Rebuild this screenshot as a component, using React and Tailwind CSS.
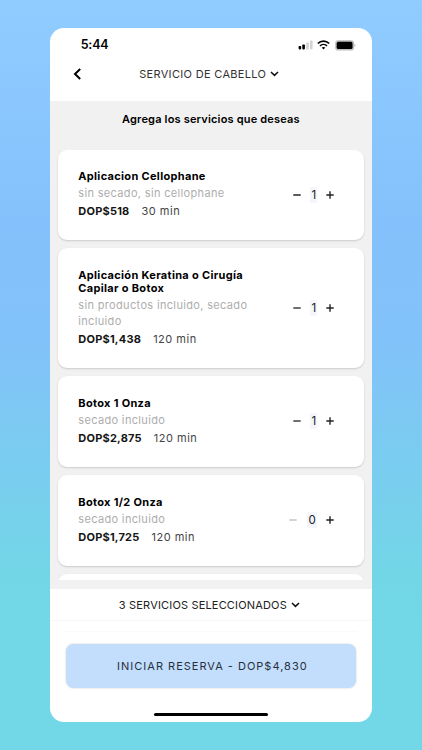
const SERVICES = [
  {
    id: "cellophane",
    title: "Aplicacion Cellophane",
    desc: "sin secado, sin cellophane",
    price: "DOP$518",
    time: "30 min",
    qty: 1,
  },
  {
    id: "keratina",
    title: "Aplicación Keratina o Cirugía Capilar o Botox",
    desc: "sin productos incluido, secado incluido",
    price: "DOP$1,438",
    time: "120 min",
    qty: 1,
  },
  {
    id: "botox-1",
    title: "Botox 1 Onza",
    desc: "secado incluido",
    price: "DOP$2,875",
    time: "120 min",
    qty: 1,
  },
  {
    id: "botox-half",
    title: "Botox 1/2 Onza",
    desc: "secado incluido",
    price: "DOP$1,725",
    time: "120 min",
    qty: 0,
  },
];

const ChevronDown = () => (
  <svg width="9" height="6" viewBox="0 0 9 6" fill="none" stroke="#111" strokeWidth="1.5" className="shrink-0">
    <path d="M1 1 L4.5 4.4 L8 1" />
  </svg>
);

const Signal = () => (
  <svg width="15" height="10" viewBox="0 0 15 10" className="shrink-0">
    <rect x="0.6" y="6" width="2.6" height="3.4" rx="0.8" fill="#000" />
    <rect x="4.3" y="4.4" width="2.6" height="5" rx="0.8" fill="#000" />
    <rect x="8.2" y="2.4" width="2.6" height="7" rx="0.8" fill="#d4d4d4" />
    <rect x="12" y="0.4" width="2.6" height="9" rx="0.8" fill="#d4d4d4" />
  </svg>
);

const Wifi = () => (
  <svg width="13" height="10" viewBox="0 0 13 10" fill="none" stroke="#000" className="shrink-0">
    <path d="M0.8 3.5 C4 0.2 9 0.2 12.2 3.5" strokeWidth="1.7" />
    <path d="M3 5.9 C5 4 8 4 10 5.9" strokeWidth="1.6" />
    <path d="M4.7 7.6 C5.7 6.8 7.3 6.8 8.3 7.6 L6.5 9.6 Z" fill="#000" stroke="none" />
  </svg>
);

const Battery = () => (
  <svg width="21" height="11" viewBox="0 0 21 11" className="shrink-0">
    <rect x="0.2" y="0.3" width="18.8" height="10.2" rx="2.8" fill="#bdbdbd" />
    <rect x="1.7" y="1.8" width="15.8" height="7.2" rx="1.6" fill="#000" />
    <path d="M19.5 3.8 C20.7 4.3 20.7 6.5 19.5 7 Z" fill="#a5a5a5" />
  </svg>
);

const Stepper = ({ qty }) => (
  <div className="flex items-center text-[#222]">
    <button className={qty === 0 ? "text-[#bdbdbd]" : "text-[#222]"}>
      <svg width="8" height="8" viewBox="0 0 8 8" stroke="currentColor" strokeWidth="1.3">
        <path d="M0.3 4 H7.7" />
      </svg>
    </button>
    <span
      className={`mr-[9px] ml-[9.5px] h-4 bg-[#f5f6fb] text-center text-[11.5px] leading-4 ${qty === 0 ? "w-[10.5px]" : "w-[7px]"}`}
    >
      {qty}
    </span>
    <button>
      <svg width="8" height="8" viewBox="0 0 8 8" stroke="currentColor" strokeWidth="1.4">
        <path d="M0.3 4 H7.7 M4 0.3 V7.7" />
      </svg>
    </button>
  </div>
);

const ServiceCard = ({ service }) => (
  <div className="flex shrink-0 items-center justify-between rounded-[9px] bg-white pt-[20.7px] pr-[29.7px] pb-[20.7px] pl-[20.3px] shadow-[0_1px_2px_rgba(0,0,0,0.16)]">
    <div className="w-[178px]">
      <h3 className="text-[11px] font-bold leading-[13px] tracking-[0.32px] text-black">{service.title}</h3>
      <p className="mt-0.5 text-[11px] leading-4 tracking-[0.34px] text-[#adadad]">{service.desc}</p>
      <div className="mt-[2.1px] flex gap-3 text-[11px] leading-4">
        <span className="font-bold tracking-[0.22px] text-[#151515]">{service.price}</span>
        <span className="tracking-[0.5px] text-[#444]">{service.time}</span>
      </div>
    </div>
    <Stepper qty={service.qty} />
  </div>
);

export default function App() {
  return (
    <div className="h-[750px] w-[422px] bg-[linear-gradient(180deg,#90ccff_0%,#84c1fc_30%,#82c2fa_45%,#72d6e6_77%,#72d8e7_100%)] pt-7 pl-[50.2px] font-['Inter',sans-serif]">
      <div className="flex h-[694px] w-[321.4px] flex-col overflow-hidden rounded-[14px] bg-white">
        <header className="h-[73px] shrink-0">
          <div className="flex h-[34px] items-center justify-between pr-[15.5px] pl-[30.5px]">
            <span className="text-[12.5px] font-semibold tracking-[-0.2px] text-black">5:44</span>
            <div className="flex items-center gap-[4.7px]">
              <Signal />
              <Wifi />
              <Battery />
            </div>
          </div>
          <div className="flex h-6 items-center">
            <svg width="9" height="12" viewBox="0 0 9 12" fill="none" stroke="#000" strokeWidth="2" className="ml-[22.5px] shrink-0">
              <path d="M7.2 1 L2 6 L7.2 11" />
            </svg>
            <div className="ml-[57.5px] flex items-center gap-1">
              <span className="text-[11px] tracking-[0.32px] text-[#333]">SERVICIO DE CABELLO</span>
              <ChevronDown />
            </div>
          </div>
        </header>

        <main className="flex h-[488px] shrink-0 flex-col bg-[#f1f1f1] pb-[9px]">
          <h2 className="shrink-0 pt-[10px] pb-[22.5px] text-center text-[11px] font-semibold leading-4 tracking-[0.18px] text-black">
            Agrega los servicios que deseas
          </h2>
          <div className="flex min-h-0 flex-1 flex-col gap-[8.4px] overflow-hidden pr-[7.5px] pl-[7.8px]">
            {SERVICES.map((service) => (
              <ServiceCard key={service.id} service={service} />
            ))}
            <div className="h-10 shrink-0 rounded-[9px] bg-white shadow-[0_1px_2px_rgba(0,0,0,0.16)]" />
          </div>
        </main>

        <footer className="flex flex-1 flex-col items-center">
          <div className="flex h-8 w-full shrink-0 items-center justify-center gap-1 border-b border-[#f8f8f8] pt-px pr-[3px]">
            <span className="text-[11px] tracking-[0.17px] text-[#222]">3 SERVICIOS SELECCIONADOS</span>
            <ChevronDown />
          </div>
          <div className="mt-[10px] w-[306px] rounded-t-[9px] border-t border-[#fafafa] px-2 pt-3">
            <button className="h-11 w-full rounded-lg bg-[#c2defc] pl-[3px] text-[11px] tracking-[1px] text-[#26303c] shadow-[0_0_2px_rgba(0,0,0,0.22)]">
              INICIAR RESERVA - DOP$4,830
            </button>
          </div>
          <div className="mt-[24.5px] h-[3.6px] w-[114.5px] rounded-full bg-black" />
        </footer>
      </div>
    </div>
  );
}
